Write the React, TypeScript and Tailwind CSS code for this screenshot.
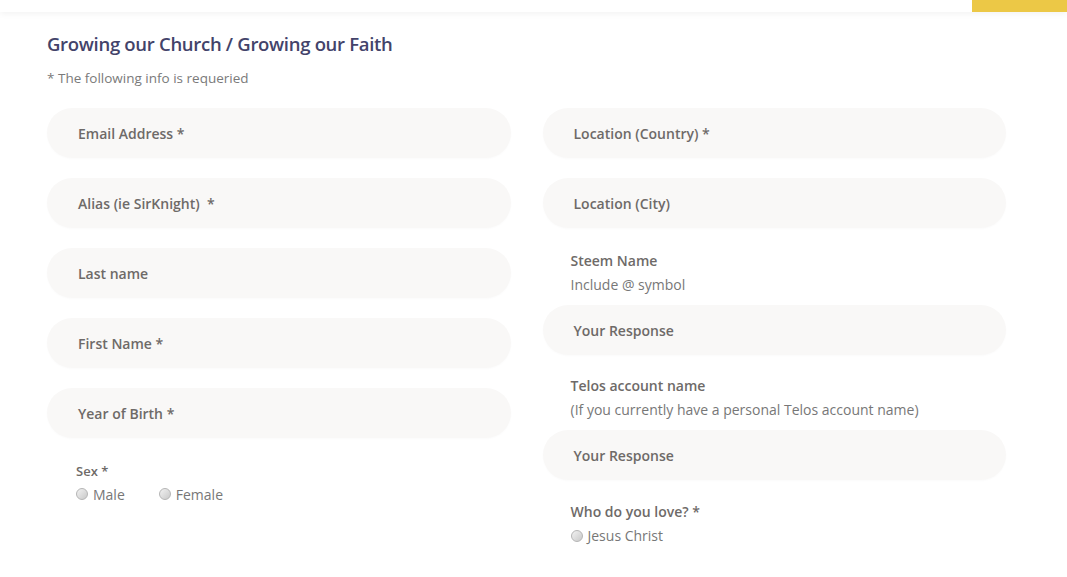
import React from 'react'

const font = { fontFamily: '"Open Sans", "Noto Sans", sans-serif' }

function Field({ placeholder }: { placeholder: string }) {
  return (
    <div className="h-[50px] w-full rounded-full bg-[#f9f8f7] flex items-center pl-[31px] text-[14px] font-semibold text-[#6e6a68] whitespace-pre shadow-[0_1px_2px_rgba(0,0,0,0.02)]">
      {placeholder}
    </div>
  )
}

function Radio({ label }: { label: string }) {
  return (
    <label className="flex items-center gap-[5px] text-[14px] text-[#777]">
      <span className="w-[12px] h-[12px] rounded-full border border-[#b5b5b5] bg-gradient-to-br from-[#f2f2f2] to-[#c9c9c9]" />
      {label}
    </label>
  )
}

export default function App() {
  return (
    <div className="min-h-screen bg-white" style={font}>
      <div className="relative h-[12px] bg-white shadow-[0_2px_6px_rgba(0,0,0,0.05)]">
        <div className="absolute right-0 top-0 h-[12px] w-[95px] bg-[#ecc846]" />
      </div>

      <div className="pl-[47px] pr-[61px] pt-[18px]">
        <h2 className="text-[18.5px] font-semibold text-[#43436a] tracking-[-0.3px] leading-[28px]">
          Growing our Church / Growing our Faith
        </h2>
        <p className="mt-[10px] text-[13.5px] text-[#7a7a7a]">* The following info is requeried</p>

        <div className="mt-[20px] grid grid-cols-2 gap-x-[32px]">
          <div className="flex flex-col gap-[20px]">
            <Field placeholder="Email Address *" />
            <Field placeholder="Alias (ie SirKnight)  *" />
            <Field placeholder="Last name" />
            <Field placeholder="First Name *" />
            <Field placeholder="Year of Birth *" />
            <div className="pl-[29px] pt-[4px]">
              <div className="text-[13px] font-semibold text-[#6e6a68]">Sex *</div>
              <div className="mt-[2px] flex gap-[34px]">
                <Radio label="Male" />
                <Radio label="Female" />
              </div>
            </div>
          </div>

          <div className="flex flex-col">
            <Field placeholder="Location (Country) *" />
            <div className="mt-[20px]">
              <Field placeholder="Location (City)" />
            </div>
            <div className="pl-[28px] mt-[22px] text-[14px] font-semibold text-[#6e6a68] leading-[22px]">Steem Name</div>
            <div className="pl-[28px] mt-[2px] text-[14px] text-[#777] leading-[22px]">Include @ symbol</div>
            <div className="mt-[9px]">
              <Field placeholder="Your Response" />
            </div>
            <div className="pl-[28px] mt-[20px] text-[14px] font-semibold text-[#6e6a68] leading-[22px]">Telos account name</div>
            <div className="pl-[28px] mt-[2px] text-[14px] text-[#777] leading-[22px]">(If you currently have a personal Telos account name)</div>
            <div className="mt-[9px]">
              <Field placeholder="Your Response" />
            </div>
            <div className="pl-[28px] mt-[21px] text-[14px] font-semibold text-[#6e6a68] leading-[22px]">Who do you love? *</div>
            <div className="pl-[28px] mt-[2px]">
              <Radio label="Jesus Christ" />
            </div>
          </div>
        </div>
      </div>
    </div>
  )
}
